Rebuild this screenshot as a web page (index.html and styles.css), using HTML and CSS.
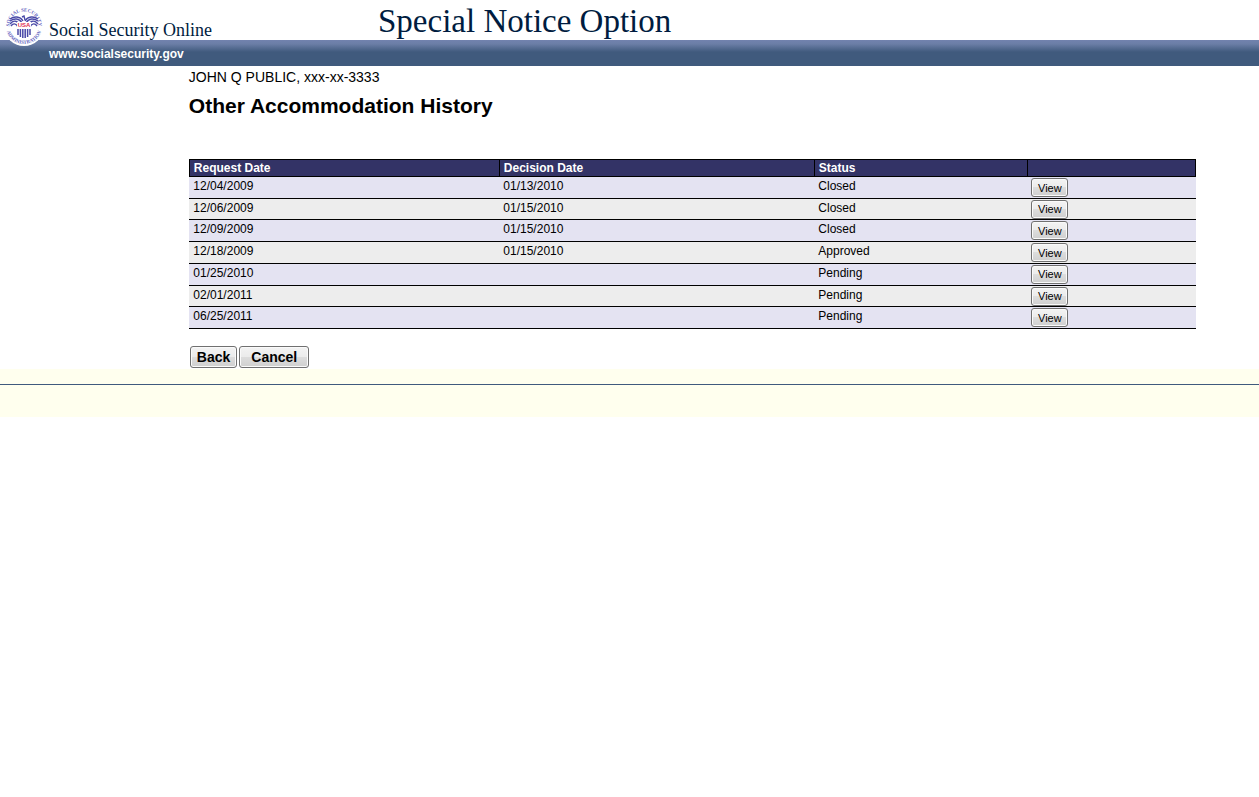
FILE: index.html
```html
<!DOCTYPE html>
<html lang="en">
<head>
  <meta charset="UTF-8">
  <meta name="viewport" content="width=device-width, initial-scale=1.0">
  <title>Special Notice Option</title>
  <link rel="stylesheet" href="styles.css">
</head>
<body>
  <header class="banner">
    <svg class="seal" viewBox="0 0 40 40" role="img" aria-label="Social Security Administration seal">
      <defs>
        <path id="seal-top" d="M6.8 26 A14.5 14.5 0 1 1 33.200 26"/>
        <path id="seal-bottom" d="M2 20 A18 18 0 0 0 38 20"/>
      </defs>
      <circle cx="20" cy="20" r="20" fill="#fff"/>
      <g class="seal-ring">
        <text><textPath href="#seal-top" startOffset="50%">SOCIAL SECURITY</textPath></text>
        <text><textPath href="#seal-bottom" startOffset="50%">ADMINISTRATION</textPath></text>
      </g>
      <!-- eagle wings -->
      <g fill="none" stroke="#4a4aa8" stroke-width="1.400">
        <path d="M19 15 C16 10 10 10 6 13"/>
        <path d="M18 17 C15 12 10 12 6 15"/>
        <path d="M16 19 C13 14 9 14 6 18"/>
        <path d="M14 21 C12 17 9 17 7 20"/>
        <path d="M21 15 C24 10 30 10 34 13"/>
        <path d="M22 17 C25 12 30 12 34 15"/>
        <path d="M24 19 C27 14 31 14 34 18"/>
        <path d="M26 21 C28 17 31 17 33 20"/>
        <path d="M18 11 L20 10 L21 14"/>
      </g>
      <!-- shield -->
      <path d="M13 16 H27 V28 Q26 31 20 32 Q14 31 13 28 Z" fill="#fff"/>
      <path d="M14 23 V29 M16.400 23 V31 M18.800 23 V32 M21.200 23 V32 M23.600 23 V31 M26 23 V29" stroke="#4a4aa8" stroke-width="1.500"/>
      <text class="seal-usa" x="20" y="21">USA</text>
    </svg>
    <div class="brand">
      <span class="site-name">Social Security Online</span>
      <a class="site-url" href="#">www.socialsecurity.gov</a>
    </div>
    <div class="app-title">Special Notice Option</div>
  </header>

  <main class="content">
    <p class="person">JOHN Q PUBLIC, xxx-xx-3333</p>
    <h1>Other Accommodation History</h1>

    <table class="history">
      <colgroup>
        <col class="col-request">
        <col class="col-decision">
        <col class="col-status">
        <col>
      </colgroup>
      <thead>
        <tr><th scope="col">Request Date</th><th scope="col">Decision Date</th><th scope="col">Status</th><th></th></tr>
      </thead>
      <tbody>
        <tr><td>12/04/2009</td><td>01/13/2010</td><td>Closed</td><td><button type="button">View</button></td></tr>
        <tr><td>12/06/2009</td><td>01/15/2010</td><td>Closed</td><td><button type="button">View</button></td></tr>
        <tr><td>12/09/2009</td><td>01/15/2010</td><td>Closed</td><td><button type="button">View</button></td></tr>
        <tr><td>12/18/2009</td><td>01/15/2010</td><td>Approved</td><td><button type="button">View</button></td></tr>
        <tr><td>01/25/2010</td><td></td><td>Pending</td><td><button type="button">View</button></td></tr>
        <tr><td>02/01/2011</td><td></td><td>Pending</td><td><button type="button">View</button></td></tr>
        <tr><td>06/25/2011</td><td></td><td>Pending</td><td><button type="button">View</button></td></tr>
      </tbody>
    </table>

    <div class="actions">
      <button type="button">Back</button>
      <button type="button">Cancel</button>
    </div>
  </main>

  <footer class="footer"></footer>
</body>
</html>
```
FILE: styles.css
```css
body {
  margin: 0;
  background: #fff;
  color: #000;
  font-family: "Liberation Sans", Arial, sans-serif;
}

/* Banner */
.banner {
  display: flex;
  height: 66px;
  background: linear-gradient(#fff 40px, #7282ae 40px, #6b7ea6 44px, #405a7d 52px, #405a7d 66px);
}
.seal {
  width: 40px;
  height: 40px;
  margin: 6px 5px 0 4px;
}
.seal-ring {
  fill: #6565c0;
  font-family: "Liberation Serif", serif;
  font-size: 5px;
  font-weight: bold;
  text-anchor: middle;
}
.seal-usa {
  fill: #e0304e;
  font-size: 6px;
  font-weight: bold;
  text-anchor: middle;
}
.brand {
  display: flex;
  flex-direction: column;
  width: 329px;
}
.site-name {
  height: 22px;
  padding-top: 20px;
  color: #001c40;
  font-family: Georgia, "Liberation Serif", serif;
  font-size: 18px;
  line-height: 20px;
}
.site-url {
  color: #fff;
  font-size: 12px;
  font-weight: bold;
  line-height: 24px;
  text-decoration: none;
}
.app-title {
  color: #001c40;
  font-family: Georgia, "Liberation Serif", serif;
  font-size: 33px;
  line-height: 42px;
}

/* Content */
.content {
  margin: 0 5% 0 15%;
}
.person {
  margin: 0;
  padding-top: 2px;
  font-size: 14px;
  line-height: 18px;
}
h1 {
  margin: 8px 0 41px;
  font-size: 21px;
  line-height: 24px;
}

.history {
  width: 100%;
  height: 170px;
  border-collapse: collapse;
  table-layout: fixed;
  font-size: 12px;
  line-height: 16px;
}
.col-request {
  width: 310px;
}
.col-decision {
  width: 315px;
}
.col-status {
  width: 213px;
}
.history th {
  padding: 0 4px;
  border: 1px solid #000;
  background: #333366;
  color: #fff;
  text-align: left;
}
.history td {
  padding: 1px 4px 0;
  border-bottom: 1px solid #000;
  vertical-align: top;
}
.history tbody tr {
  background: #ededed;
}
.history tbody tr:nth-child(odd) {
  background: #e4e3f2;
}

button {
  border: 1px solid #707070;
  border-radius: 3px;
  background: linear-gradient(#f3f3f3, #ebebeb 50%, #dddddd 50%, #cfcfcf);
  box-shadow: inset 0 0 0 1px #fafafa;
  color: #000;
  font-family: inherit;
}
.history button {
  display: block;
  width: 37px;
  height: 19px;
  padding: 0;
  font-size: 11px;
}

.actions {
  display: flex;
  gap: 2px;
  padding: 17px 1px 1px;
}
.actions button {
  height: 22px;
  padding: 0 6px;
  font-size: 14px;
  font-weight: bold;
}
.actions button + button {
  padding: 0 11px;
}

/* Footer */
.footer {
  padding-top: 15px;
  background: #ffffee;
}
.footer::after {
  content: "";
  display: block;
  height: 32px;
  border-top: 1px solid #405a7d;
}
```
